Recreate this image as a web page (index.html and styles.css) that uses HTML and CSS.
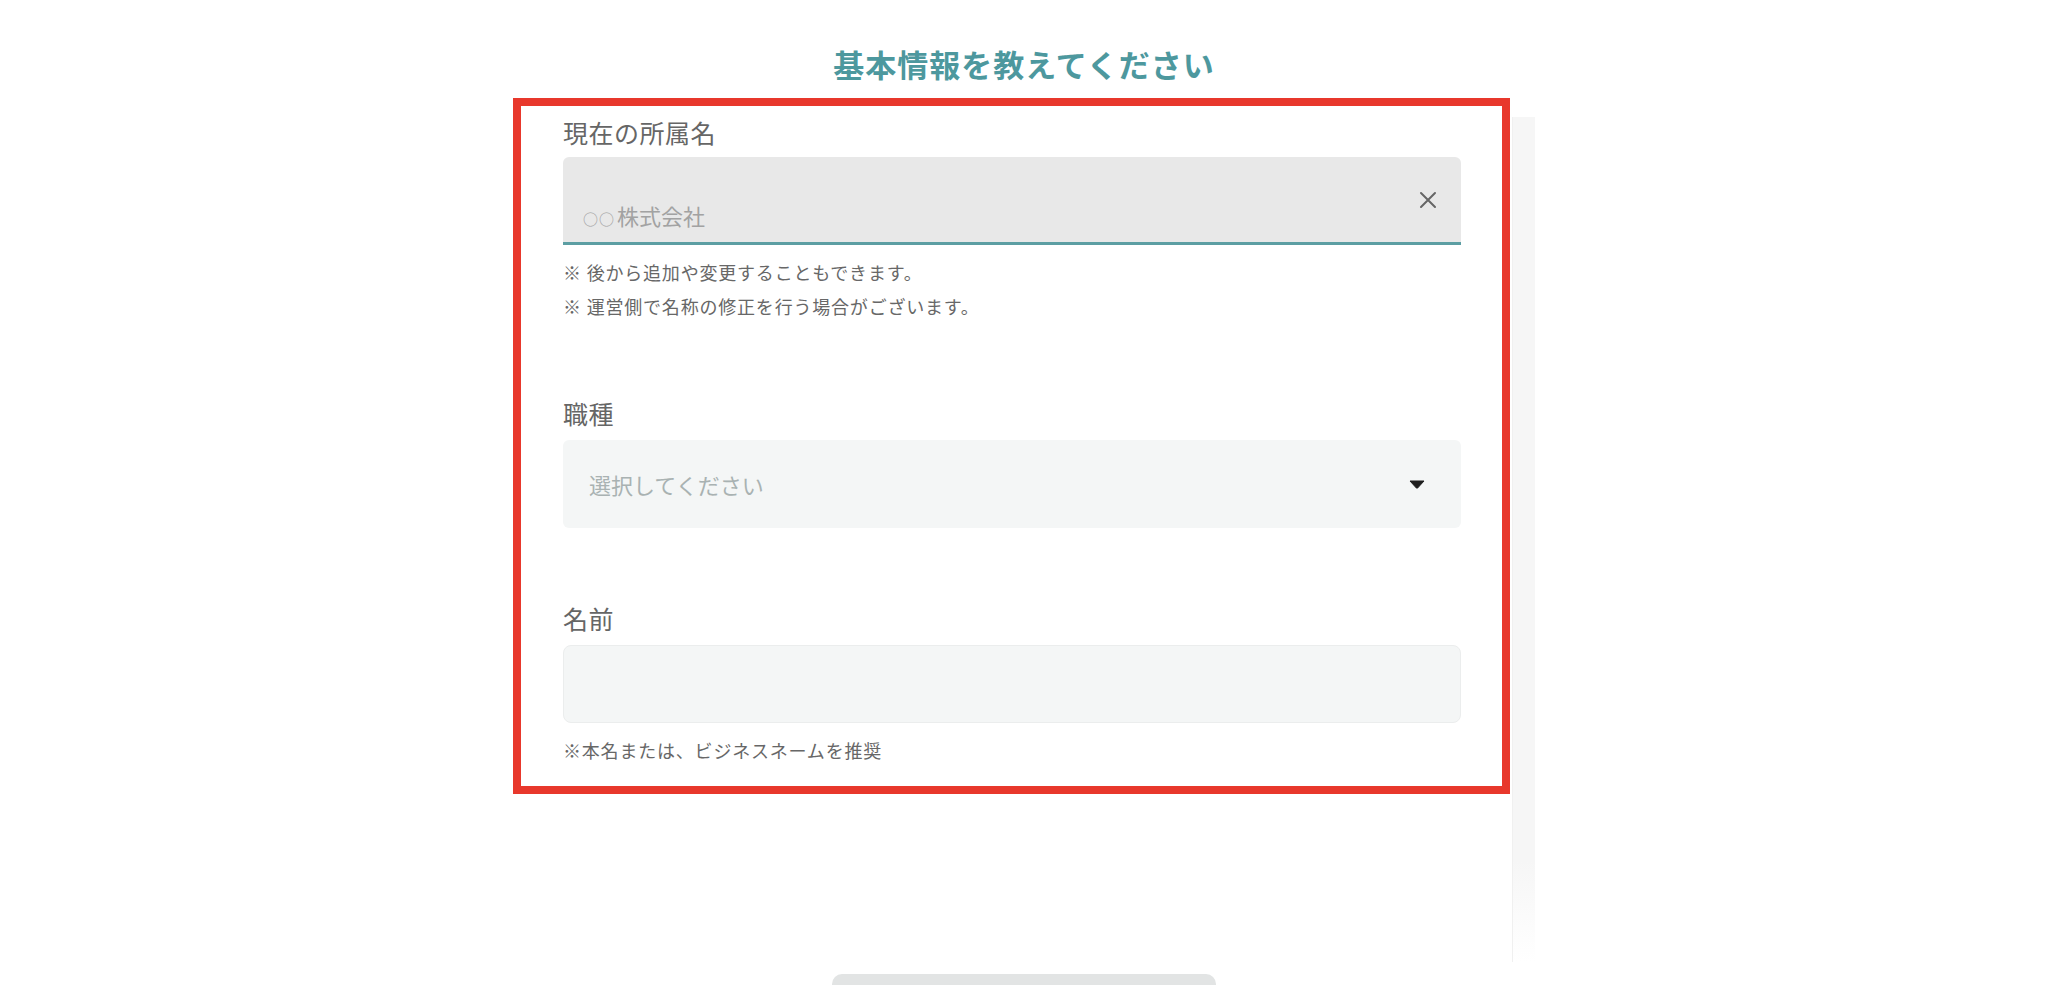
FILE: index.html
```html
<!DOCTYPE html>
<html lang="ja">
<head>
<meta charset="utf-8">
<title>基本情報を教えてください</title>
<link rel="stylesheet" href="styles.css">
</head>
<body>
<main class="page">
  <h1 class="title">基本情報を教えてください</h1>
  <div class="column">
    <section class="form-box">
      <div class="field">
        <div class="label">現在の所属名</div>
        <div class="text-field">
          <span class="tf-placeholder"><span class="circles">○○</span>株式会社</span>
          <svg class="clear-icon" width="18" height="18" viewBox="0 0 18 18" aria-hidden="true">
            <path d="M2 2 L16 16 M16 2 L2 16" stroke="#666" stroke-width="2" stroke-linecap="round" fill="none"/>
          </svg>
        </div>
        <div class="notes">
          <p class="note">※ 後から追加や変更することもできます。</p>
          <p class="note">※ 運営側で名称の修正を行う場合がございます。</p>
        </div>
      </div>
      <div class="field field-select">
        <div class="label">職種</div>
        <div class="select">
          <span class="select-placeholder">選択してください</span>
          <svg class="caret" width="16" height="9" viewBox="0 0 16 9" aria-hidden="true">
            <path d="M1 1 L15 1 L8.6 8 Q8 8.6 7.4 8 Z" fill="#1e1e1e" stroke="#1e1e1e" stroke-width="1" stroke-linejoin="round"/>
          </svg>
        </div>
      </div>
      <div class="field field-name">
        <div class="label">名前</div>
        <div class="plain-input"></div>
        <div class="notes">
          <p class="note">※本名または、ビジネスネームを推奨</p>
        </div>
      </div>
    </section>
    <div class="scroll-track"></div>
  </div>
  <div class="next-button"></div>
</main>
</body>
</html>
```

FILE: styles.css
```css
* { box-sizing: border-box; }

html, body {
  margin: 0;
  padding: 0;
  background: #ffffff;
  height: 100%;
  overflow: hidden;
}

body {
  font-family: "Noto Sans CJK JP", "Noto Sans", sans-serif;
  color: #5a5a5a;
}

.page {
  display: flex;
  flex-direction: column;
  align-items: center;
}

.title {
  margin: 44px 0 0;
  height: 40px;
  line-height: 40px;
  font-size: 31px;
  font-weight: 700;
  color: #4d989e;
  letter-spacing: 1px;
}

.column {
  width: 1022px;
  margin-top: 14px;
  display: flex;
  align-items: flex-start;
  gap: 2px;
}

.form-box {
  width: 997px;
  border: 8px solid #e8382c;
  padding: 10px 41px 19px 42px;
  display: flex;
  flex-direction: column;
}

.field-select { margin-top: 74px; }
.field-name { margin-top: 74px; }

.label {
  font-size: 25px;
  line-height: 32px;
  letter-spacing: 0.5px;
  color: #666666;
  margin-bottom: 9px;
}

.field-select .label,
.field-name .label { margin-bottom: 11px; }

.text-field {
  height: 88px;
  background: #e8e8e8;
  border-radius: 6px 6px 0 0;
  border-bottom: 3px solid #5c9ea3;
  display: flex;
  align-items: center;
  justify-content: space-between;
  padding: 0 24px 0 20px;
}

.tf-placeholder {
  font-size: 22px;
  line-height: 30px;
  color: #a2a2a2;
  padding-top: 34px;
}

.circles {
  font-size: 15px;
  letter-spacing: 1px;
  margin-right: 2px;
}

.clear-icon { display: block; }

.notes {
  margin-top: 10px;
}

.note {
  margin: 0;
  font-size: 18px;
  line-height: 34px;
  letter-spacing: 0.8px;
  color: #676767;
}

.select {
  height: 88px;
  background: #f4f6f6;
  border-radius: 6px;
  display: flex;
  align-items: center;
  justify-content: space-between;
  padding: 0 36px 0 26px;
}

.select-placeholder {
  font-size: 22px;
  line-height: 30px;
  color: #a9b2b2;
}

.caret { display: block; }

.plain-input {
  height: 78px;
  background: #f4f6f6;
  border: 1px solid #ebeded;
  border-radius: 8px;
}

.scroll-track {
  width: 23px;
  height: 845px;
  margin-top: 19px;
  margin-bottom: -200px;
  background: linear-gradient(to bottom, #f6f6f6 0%, #f6f6f6 88%, #ffffff 100%);
  border-left: 1px solid #f0f0f0;
}

.next-button {
  width: 384px;
  height: 11px;
  margin-top: 180px;
  background: #e2e4e4;
  border-radius: 10px 10px 0 0;
}
```
